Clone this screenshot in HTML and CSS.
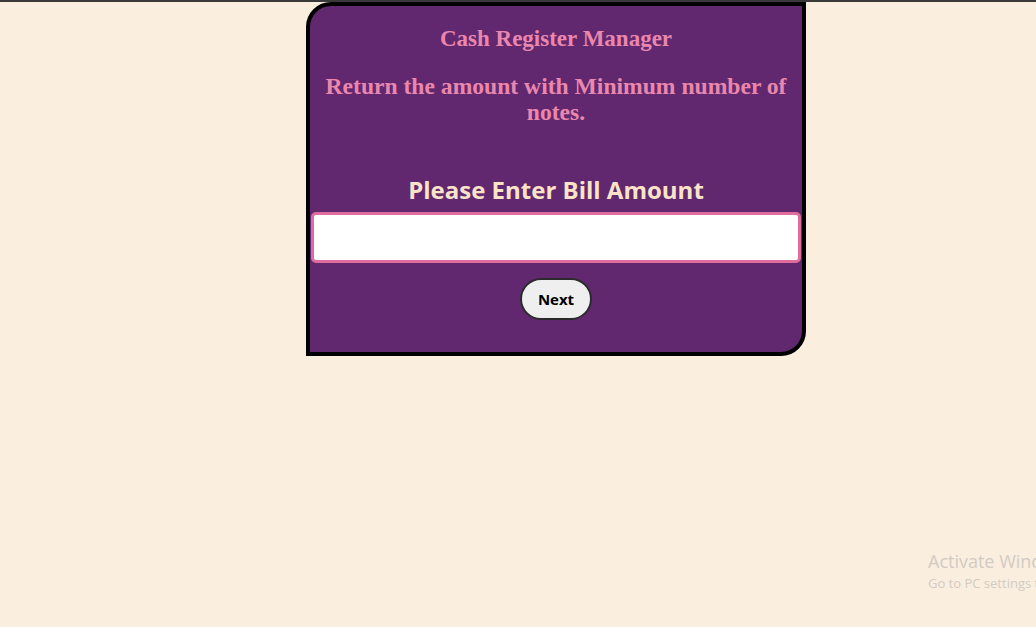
FILE: index.html
```html
<!DOCTYPE html>
<html lang="en">
<head>
<meta charset="utf-8">
<title>Cash Register Manager</title>
<link rel="stylesheet" href="styles.css">
</head>
<body>
<div class="topbar"></div>
<main class="card">
  <h1 class="title">Cash Register Manager</h1>
  <h2 class="subtitle">Return the amount with Minimum number of notes.</h2>
  <label class="label" for="bill">Please Enter Bill Amount</label>
  <input class="bill-input" id="bill" type="number">
  <button class="next-btn" type="button">Next</button>
</main>
<div class="watermark">
  <div class="wm-big">Activate Windows</div>
  <div class="wm-small">Go to PC settings to activate Windows.</div>
</div>
</body>
</html>
```
FILE: styles.css
```css
html, body {
  margin: 0;
  padding: 0;
}
body {
  background: #faeedf;
  min-height: 627px;
  overflow: hidden;
  font-family: "Liberation Serif", serif;
}
.topbar {
  height: 2px;
  background: #3a3a3a;
}
.card {
  box-sizing: border-box;
  width: 500px;
  height: 354px;
  margin-left: 306px;
  background: #61276f;
  border: 4px solid #000;
  border-radius: 25px 0 25px 0;
  display: flex;
  flex-direction: column;
  align-items: center;
  padding: 0 1px;
}
.title {
  margin: 20px 0 0;
  font-size: 23px;
  line-height: 26px;
  font-weight: bold;
  color: #ea87ad;
  text-align: center;
}
.subtitle {
  margin: 21px 0 0;
  font-size: 23.6px;
  line-height: 26px;
  font-weight: bold;
  color: #ea87ad;
  text-align: center;
  padding: 0 8px;
}
.label {
  margin-top: 49px;
  font-family: "Open Sans", "Noto Sans", sans-serif;
  font-weight: bold;
  font-size: 24px;
  line-height: 32px;
  color: #fae3c6;
}
.bill-input {
  box-sizing: border-box;
  margin-top: 6px;
  width: 490px;
  height: 51px;
  border: 3px solid #de6d9d;
  border-radius: 5px;
  background: #fff;
  outline: none;
  font-size: 18px;
}
.next-btn {
  box-sizing: border-box;
  margin-top: 15px;
  width: 72px;
  height: 42px;
  border: 2px solid #2b2b2b;
  border-radius: 21px;
  background: #efefef;
  font-family: "Open Sans", "Noto Sans", sans-serif;
  font-weight: bold;
  font-size: 15px;
  color: #000;
  padding: 0;
}
.watermark {
  position: absolute;
  left: 928px;
  top: 549px;
  white-space: nowrap;
  color: #d2cbc3;
  font-family: "Open Sans", "Noto Sans", sans-serif;
}
.wm-big {
  font-size: 18px;
  line-height: 24px;
}
.wm-small {
  font-size: 13px;
  line-height: 20px;
}
```
